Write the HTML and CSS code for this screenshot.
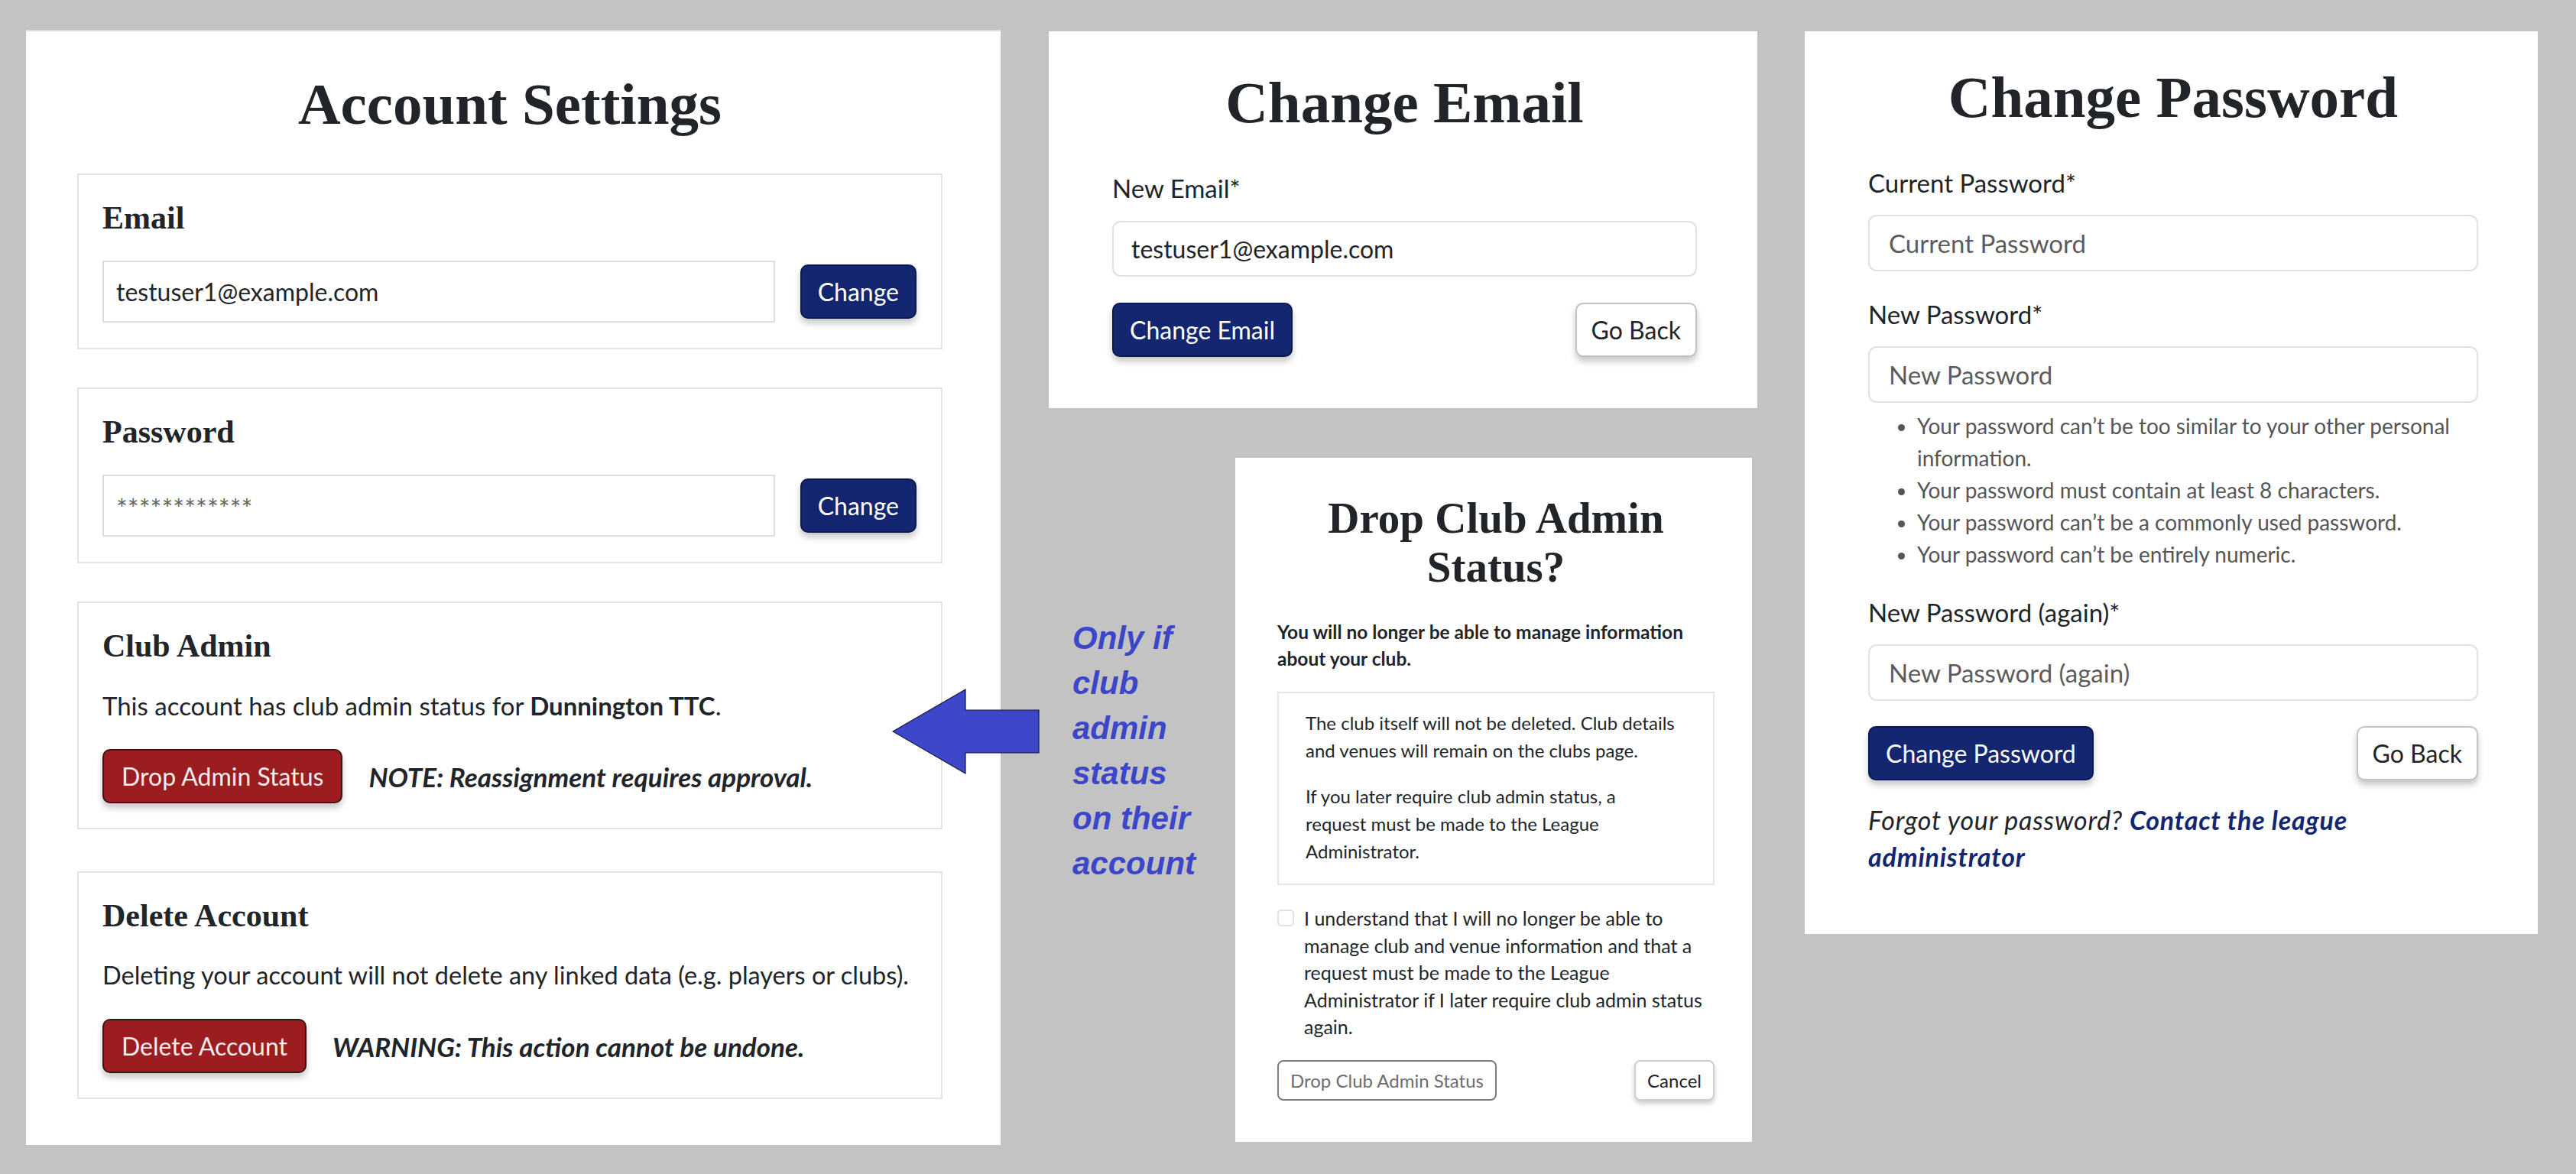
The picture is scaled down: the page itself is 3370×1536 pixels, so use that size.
FILE: index.html
```html
<!DOCTYPE html>
<html lang="en">
<head>
<meta charset="utf-8">
<title>Account Settings</title>
<link rel="stylesheet" href="styles.css">
</head>
<body>
<div class="canvas">
  <section class="panel panel-account">
    <h1 class="title">Account Settings</h1>
    <div class="card card-first">
      <h2 class="card-title">Email</h2>
      <div class="field-row">
        <input class="text-input square" type="text" value="testuser1@example.com" readonly>
        <button class="btn btn-primary">Change</button>
      </div>
    </div>
    <div class="card">
      <h2 class="card-title">Password</h2>
      <div class="field-row">
        <input class="text-input square muted" type="text" value="************" readonly>
        <button class="btn btn-primary">Change</button>
      </div>
    </div>
    <div class="card">
      <h2 class="card-title">Club Admin</h2>
      <p class="card-text">This account has club admin status for <strong>Dunnington TTC</strong>.</p>
      <div class="action-row">
        <button class="btn btn-danger">Drop Admin Status</button>
        <span class="note">NOTE: Reassignment requires approval.</span>
      </div>
    </div>
    <div class="card card-last">
      <h2 class="card-title">Delete Account</h2>
      <p class="card-text card-text-long">Deleting your account will not delete any linked data (e.g. players or clubs).</p>
      <div class="action-row">
        <button class="btn btn-danger">Delete Account</button>
        <span class="note">WARNING: This action cannot be undone.</span>
      </div>
    </div>
  </section>

  <div class="middle">
    <section class="panel panel-email">
      <h1 class="title">Change Email</h1>
      <label class="label">New Email*</label>
      <input class="text-input rounded" type="text" value="testuser1@example.com" readonly>
      <div class="button-row">
        <button class="btn btn-primary">Change Email</button>
        <button class="btn btn-light">Go Back</button>
      </div>
    </section>

    <section class="panel panel-drop">
      <h1 class="title title-small">Drop Club Admin Status?</h1>
      <p class="warn-bold">You will no longer be able to manage information about your club.</p>
      <div class="info-box">
        <p>The club itself will not be deleted. Club details and venues will remain on the clubs page.</p>
        <p class="info-second">If you later require club admin status, a request must be made to the League Administrator.</p>
      </div>
      <div class="check-row">
        <input class="checkbox" type="checkbox">
        <span class="check-text">I understand that I will no longer be able to manage club and venue information and that a request must be made to the League Administrator if I later require club admin status again.</span>
      </div>
      <div class="button-row button-row-small">
        <button class="btn-small btn-disabled">Drop Club Admin Status</button>
        <button class="btn-small btn-cancel">Cancel</button>
      </div>
    </section>
  </div>

  <section class="panel panel-password">
    <h1 class="title">Change Password</h1>
    <label class="label">Current Password*</label>
    <input class="text-input rounded" type="password" placeholder="Current Password">
    <label class="label label-gap">New Password*</label>
    <input class="text-input rounded" type="password" placeholder="New Password">
    <ul class="rules">
      <li>Your password can’t be too similar to your other personal information.</li>
      <li>Your password must contain at least 8 characters.</li>
      <li>Your password can’t be a commonly used password.</li>
      <li>Your password can’t be entirely numeric.</li>
    </ul>
    <label class="label label-gap2">New Password (again)*</label>
    <input class="text-input rounded" type="password" placeholder="New Password (again)">
    <div class="button-row">
      <button class="btn btn-primary">Change Password</button>
      <button class="btn btn-light">Go Back</button>
    </div>
    <p class="forgot"><span>Forgot your password?</span> <a class="forgot-link" href="#"><span>Contact the league</span> <span>administrator</span></a></p>
  </section>

  <svg class="arrow" width="194" height="114" viewBox="0 0 194 114" aria-hidden="true">
    <polygon points="1,57 96,2 96,29 192,29 192,85 96,85 96,112" fill="#3e47c9" stroke="#15163a" stroke-width="1.2"/>
  </svg>
  <p class="annotation">Only if club admin status on their account</p>
</div>
</body>
</html>
```

FILE: styles.css
```css
html, body {
  margin: 0;
  padding: 0;
}

body {
  background: #c3c3c3;
  width: 3370px;
  height: 1536px;
  overflow: hidden;
  font-family: "Lato", "Liberation Sans", sans-serif;
  color: #212529;
}

.canvas {
  position: relative;
  display: flex;
  align-items: flex-start;
  padding: 39px 0 0 34px;
  box-sizing: border-box;
  width: 3370px;
  height: 1536px;
}

.panel {
  background: #ffffff;
  box-sizing: border-box;
  display: flex;
  flex-direction: column;
}

.title {
  font-family: "Liberation Serif", serif;
  font-weight: 700;
  font-size: 77px;
  line-height: 92px;
  text-align: center;
  margin: 0;
  color: #212529;
}

.title-small {
  font-size: 57px;
  line-height: 64px;
}

/* Account settings panel */
.panel-account {
  width: 1275px;
  height: 1459px;
  border-top: 2px solid #dcdcdc;
  padding: 49px 76px 0 67px;
}

.card {
  border: 2px solid #e3e3e3;
  padding: 31px 32px 32px 31px;
  margin-top: 50px;
}

.card-first {
  margin-top: 45px;
}

.card-last {
  margin-top: 55px;
}

.card-title {
  font-family: "Liberation Serif", serif;
  font-weight: 700;
  font-size: 42px;
  line-height: 50px;
  margin: 0;
}

.field-row {
  display: flex;
  align-items: center;
  gap: 33px;
  margin-top: 31px;
  margin-bottom: 1px;
}

.text-input {
  box-sizing: border-box;
  font-family: "Lato", "Liberation Sans", sans-serif;
  font-size: 32px;
  color: #212529;
  background: #fff;
  outline: none;
  margin: 0;
}

.text-input.square {
  flex: 1;
  height: 81px;
  border: 2px solid #dedede;
  border-radius: 0;
  padding: 0 16px;
}

.text-input.muted {
  color: #666;
  font-size: 35px;
  padding-top: 4px;
}

.text-input.rounded {
  width: 100%;
  height: 74px;
  border: 2px solid #e1e1e4;
  border-radius: 11px;
  padding: 0 25px;
  margin-top: 19px;
  font-size: 33px;
}

.text-input::placeholder {
  color: #5c5c5c;
  opacity: 1;
}

.card-text {
  font-size: 33px;
  line-height: 48px;
  margin: 29px 0 0 0;
}

.card-text-long {
  font-size: 32.5px;
  white-space: nowrap;
}

.card-text strong {
  font-weight: 700;
}

.action-row {
  display: flex;
  align-items: center;
  gap: 34px;
  margin-top: 33px;
}

.note {
  font-size: 35px;
  font-weight: 700;
  font-style: italic;
}

.btn {
  box-sizing: border-box;
  height: 71px;
  padding: 0 21px;
  font-family: "Lato", "Liberation Sans", sans-serif;
  font-size: 32px;
  border-radius: 10px;
  border: 2px solid transparent;
  box-shadow: 0 6px 8px rgba(0, 0, 0, 0.22);
  cursor: pointer;
  white-space: nowrap;
}

.btn-primary {
  background: #13266f;
  border-color: #0b1a4c;
  color: #ffffff;
}

.btn-danger {
  background: #9b1d1f;
  border-color: #3b1516;
  color: #f6eaea;
  padding: 0 23px;
}

.btn-light {
  background: #ffffff;
  border-color: #c2c2c2;
  color: #212529;
  padding: 0 19px;
}

/* Change Email panel */
.middle {
  display: flex;
  flex-direction: column;
  margin-left: 63px;
  margin-top: 2px;
}

.panel-email {
  width: 927px;
  height: 493px;
  padding: 47px 79px 0 83px;
}

.label {
  display: block;
  font-size: 33px;
  line-height: 45px;
  margin-top: 44px;
}

.label-gap {
  margin-top: 34px;
}

.label-gap2 {
  margin-top: 33px;
}

.panel-email .text-input.rounded {
  height: 73px;
  margin-top: 20px;
  padding-left: 23px;
  font-size: 32px;
}

.button-row {
  display: flex;
  justify-content: space-between;
  align-items: center;
  margin-top: 33px;
}

.panel-email .button-row {
  margin-top: 34px;
}

/* Drop club admin panel */
.panel-drop {
  width: 676px;
  height: 895px;
  margin-left: 244px;
  margin-top: 65px;
  padding: 47px 49px 0 55px;
}

.warn-bold {
  font-size: 24.5px;
  font-weight: 700;
  line-height: 35px;
  margin: 35px 0 0 0;
}

.info-box {
  border: 2px solid #e5e5e5;
  margin-top: 26px;
  padding: 21px 34px 24px 35px;
  font-size: 24px;
  line-height: 36px;
}

.info-box p {
  margin: 0;
}

.info-box p + p {
  margin-top: 24px;
}

.info-box .info-second {
  padding-right: 30px;
}

.check-row {
  display: flex;
  align-items: flex-start;
  gap: 13px;
  margin-top: 26px;
}

.checkbox {
  appearance: none;
  -webkit-appearance: none;
  flex: none;
  width: 22px;
  height: 22px;
  margin: 6px 0 0 0;
  border: 2px solid #e2e2e2;
  border-radius: 5px;
  background: #fff;
}

.check-text {
  font-size: 25px;
  line-height: 35.5px;
  padding-right: 10px;
}

.button-row-small {
  margin-top: 25px;
}

.btn-small {
  box-sizing: border-box;
  height: 53px;
  padding: 0 15px;
  font-family: "Lato", "Liberation Sans", sans-serif;
  font-size: 24px;
  border-radius: 8px;
  background: #fff;
  white-space: nowrap;
}

.btn-disabled {
  border: 2px solid #7c7c7c;
  color: #6e6e6e;
}

.btn-cancel {
  border: 2px solid #cfcfcf;
  color: #212529;
  box-shadow: 0 4px 6px rgba(0, 0, 0, 0.2);
}

/* Change password panel */
.panel-password {
  width: 959px;
  height: 1181px;
  margin-left: 62px;
  margin-top: 2px;
  padding: 40px 78px 0 83px;
}

.rules {
  margin: 9px 0 0 0;
  padding-left: 64px;
  font-size: 28px;
  line-height: 42px;
  color: #555;
}

.forgot {
  font-size: 34px;
  letter-spacing: 0.8px;
  line-height: 48px;
  font-style: italic;
  margin: 28px 0 0 0;
}

.forgot-link {
  color: #13266f;
  font-weight: 700;
  text-decoration: none;
}

/* Annotation overlay */
.arrow {
  position: absolute;
  left: 1167px;
  top: 900px;
}

.annotation {
  position: absolute;
  left: 1403px;
  top: 805px;
  width: 175px;
  margin: 0;
  font-family: "Liberation Sans", sans-serif;
  font-weight: 700;
  font-style: italic;
  font-size: 42px;
  line-height: 59px;
  color: #3b46c8;
}
```
